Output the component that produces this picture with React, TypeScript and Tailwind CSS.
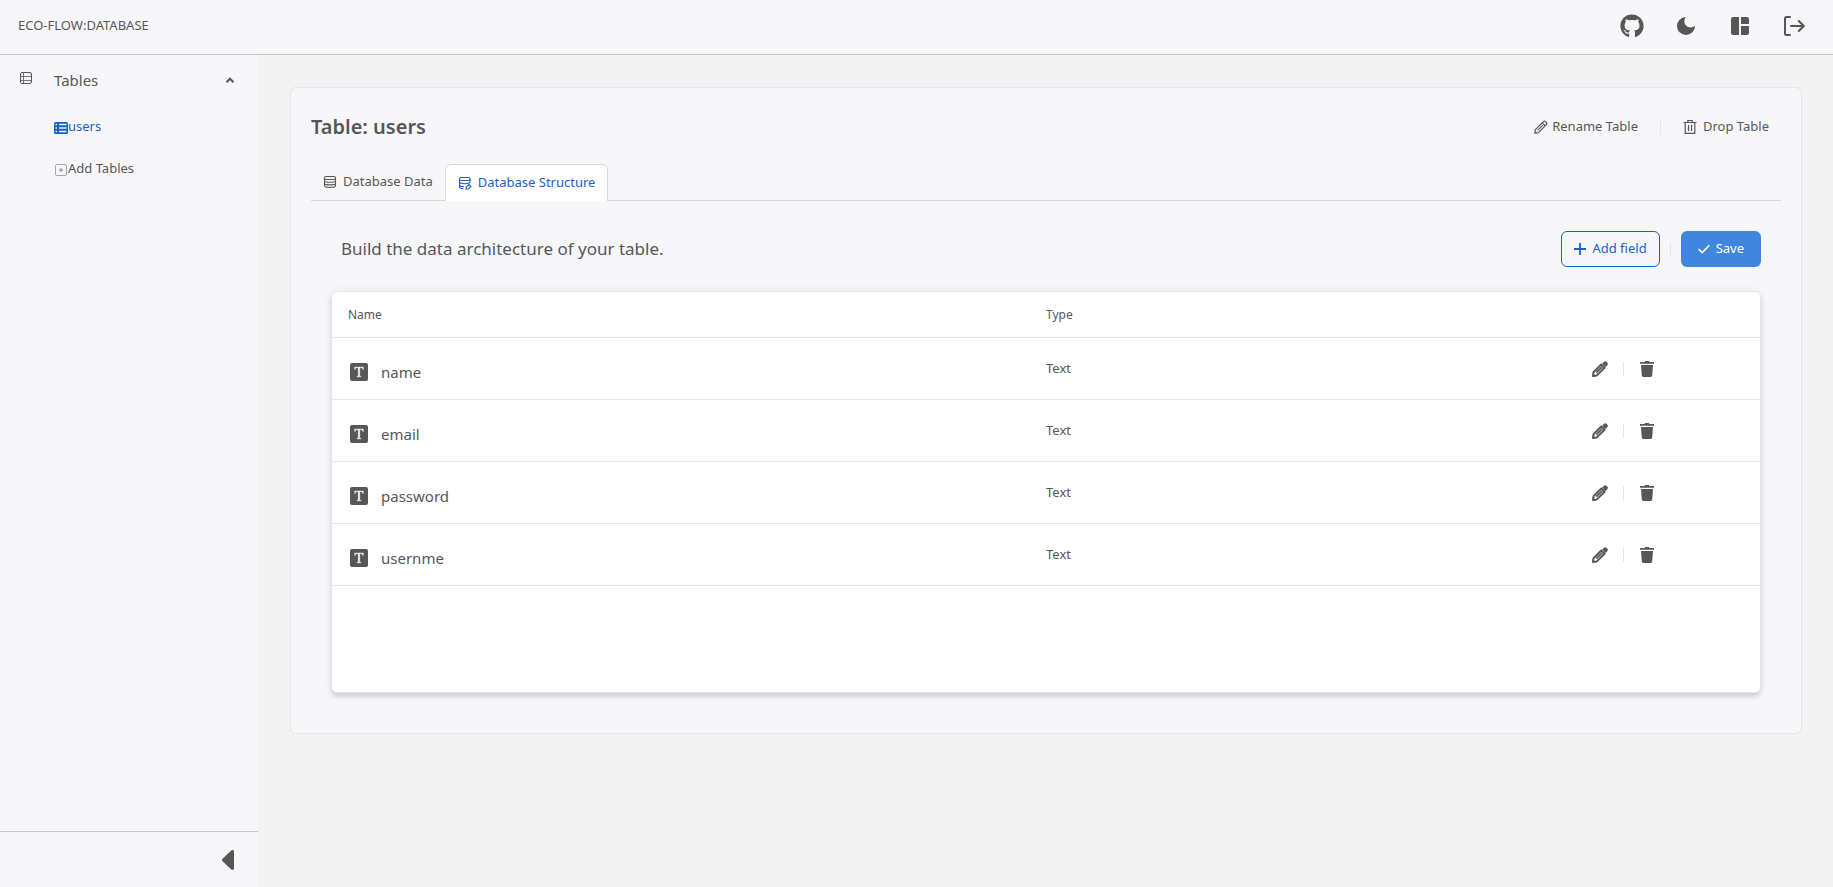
import { useState } from 'react';
import { FaGithub } from 'react-icons/fa';
import { BsFonts } from 'react-icons/bs';

const fields = [
  { name: 'name', type: 'Text' },
  { name: 'email', type: 'Text' },
  { name: 'password', type: 'Text' },
  { name: 'usernme', type: 'Text' },
];

function TableIcon({ filled = false, className = '' }: { filled?: boolean; className?: string }) {
  if (filled) {
    return (
      <svg viewBox="0 0 14 14" className={className} aria-hidden="true">
        <rect x="0" y="1" width="14" height="12" rx="1.5" fill="currentColor" />
        <path
          d="M1.5 3.5h1.5M5 3.5h7.5M1.5 7h1.5M5 7h7.5M1.5 10.5h1.5M5 10.5h7.5"
          stroke="#f7f7fa"
          strokeWidth="1.3"
        />
      </svg>
    );
  }
  return (
    <svg viewBox="0 0 14 14" className={className} fill="none" stroke="currentColor" aria-hidden="true">
      <rect x="1.5" y="1.5" width="11" height="11" rx="1.5" />
      <path d="M4.5 1.5v11M1.5 5.5h11M1.5 9.5h11" strokeWidth="0.8" />
    </svg>
  );
}

function PencilIcon({ bold = false, className = '' }: { bold?: boolean; className?: string }) {
  if (bold) {
    return (
      <svg viewBox="0 0 16 16" className={className} fill="none" stroke="currentColor" aria-hidden="true">
        <path d="M1 15l.5-3.8 7.800-7.700 3.300 3.300-7.800 7.600z" strokeWidth="2" strokeLinejoin="round" />
        <path d="M4.300 11.700l5.800-5.800" strokeWidth="1.700" />
        <path
          d="M10.200 2.600l1.700-1.700a2 2 0 0 1 2.800 0l.5.500a2 2 0 0 1 0 2.800l-1.700 1.700z"
          fill="currentColor"
          stroke="none"
        />
      </svg>
    );
  }
  return (
    <svg viewBox="0 0 14 14" className={className} fill="none" stroke="currentColor" aria-hidden="true">
      <path
        d="M.8 13.200l.6-3.600 8-8a1.500 1.500 0 0 1 2.100 0l.9.900a1.500 1.500 0 0 1 0 2.100l-8 8z"
        strokeWidth="1.200"
        strokeLinejoin="round"
      />
      <path d="M8.200 2.800l3 3M3.800 10.200l5-5" strokeWidth="1.200" />
    </svg>
  );
}

function TrashOutlineIcon() {
  return (
    <svg viewBox="0 0 14 14" className="size-3.5" fill="none" stroke="currentColor" aria-hidden="true">
      <path d="M.5 2.500h13M4.800 2.500v-2h4.400v2M2.200 2.500v10.900h9.600v-10.900M5.500 5v6M8.500 5v6" strokeWidth="1.200" />
    </svg>
  );
}

function TrashIcon() {
  return (
    <svg viewBox="0 0 16 16" className="size-4" fill="currentColor" aria-hidden="true">
      <path d="M1 1h4.500l.6-1h3.800l.6 1H15v1.800H1zM2 4h12l-.8 10.600a1.500 1.500 0 0 1-1.500 1.400H4.300a1.500 1.500 0 0 1-1.500-1.400z" />
    </svg>
  );
}

function DatabaseIcon({ edit = false }: { edit?: boolean }) {
  return (
    <svg viewBox="0 0 14 14" className="size-3.5" fill="none" stroke="currentColor" strokeWidth="1.1" aria-hidden="true">
      {edit ? (
        <>
          <rect x="1.500" y="1.500" width="10.500" height="3" rx="1.500" />
          <path d="M1.500 3v8.300c0 .9 1.500 1.300 4 1.400M12 3v3.200M1.500 6.300c.5 1 2.500 1.400 5.300 1.400s4.700-.4 5.200-1.400M1.500 9.300c.5 1 2 1.300 4.500 1.400" />
          <path d="M8 13.200l.4-2.300 2.600-2.500 2 2-2.700 2.600z" />
        </>
      ) : (
        <>
          <rect x="1.500" y="1.500" width="11" height="3" rx="1.500" />
          <path d="M1.500 3v7.800c0 1.200 1.200 1.700 5.500 1.700s5.500-.5 5.500-1.700V3M1.500 5.800c.3 1.100 1.800 1.400 5.500 1.400s5.200-.3 5.500-1.400M1.500 8.500c.3 1.100 1.800 1.400 5.500 1.400s5.200-.3 5.500-1.400" />
        </>
      )}
    </svg>
  );
}

function Header() {
  return (
    <header className="flex h-[55px] shrink-0 items-center justify-between border-b border-[#c5c6c7] bg-[#f7f7fa] pr-[27px] pb-0.5 pl-[18px]">
      <h1 className="text-[13px]">ECO-FLOW:DATABASE</h1>
      <div className="flex items-center gap-[30px]">
        <a href="#github" aria-label="GitHub">
          <FaGithub className="size-6" />
        </a>
        <button type="button" aria-label="Toggle theme">
          <svg viewBox="0 0 24 24" className="size-6" fill="currentColor" aria-hidden="true">
            <path d="M12 3a6 6 0 0 0 9 8.500A9 9 0 1 1 12 3z" />
          </svg>
        </button>
        <button type="button" aria-label="Dashboard">
          <svg viewBox="0 0 24 24" className="size-6" fill="currentColor" aria-hidden="true">
            <path d="M11 3v18H5a2 2 0 0 1-2-2V5a2 2 0 0 1 2-2zM13 3h6a2 2 0 0 1 2 2v5h-8zM13 12h8v7a2 2 0 0 1-2 2h-6z" />
          </svg>
        </button>
        <button type="button" aria-label="Log out">
          <svg
            viewBox="0 0 24 24"
            className="size-6"
            fill="none"
            stroke="currentColor"
            strokeWidth="2"
            strokeLinecap="round"
            strokeLinejoin="round"
            aria-hidden="true"
          >
            <path d="M8 3H4.500A1.500 1.500 0 0 0 3 4.500v15A1.500 1.500 0 0 0 4.500 21H8M9 12h12.500M16.800 7l5 5-5 5" />
          </svg>
        </button>
      </div>
    </header>
  );
}

function Sidebar() {
  const [open, setOpen] = useState(true);

  return (
    <aside className="flex w-[258px] shrink-0 flex-col bg-[#f7f7fa]">
      <nav className="flex-1">
        <button
          type="button"
          aria-expanded={open}
          onClick={() => setOpen(!open)}
          className="flex h-[51px] w-full items-center pr-[23px] pl-[19px] text-left text-[15px]"
        >
          <TableIcon className="mb-1.5 size-3.5" />
          <span className="ml-[21px] flex-1">Tables</span>
          <svg viewBox="0 0 10 6" className="mb-0.5 h-1.5 w-2.5" fill="none" stroke="currentColor" strokeWidth="2" aria-hidden="true">
            <path d="M1.500 5.200L5 1.700l3.500 3.500" />
          </svg>
        </button>
        {open && (
          <ul className="text-[13px]">
            <li>
              <a href="#users" className="flex h-[42px] items-center pl-[54px] text-[#1b5fc9]">
                <TableIcon filled className="mt-0.5 size-3.5" />
                users
              </a>
            </li>
            <li>
              <button type="button" className="flex h-[42px] w-full items-center pl-[54px]">
                <svg viewBox="0 0 14 14" className="mt-0.5 size-3.5 text-[#a5a5a7]" fill="none" stroke="currentColor" aria-hidden="true">
                  <rect x="1.500" y="1.500" width="11" height="11" rx="1.500" />
                  <path d="M7 5v4M5 7h4" strokeWidth="1.400" />
                </svg>
                Add Tables
              </button>
            </li>
          </ul>
        )}
      </nav>
      <div className="flex h-14 items-center justify-end border-t border-[#c5c6c7] pr-6">
        <button type="button" aria-label="Collapse sidebar">
          <svg viewBox="0 0 12 20" className="h-5 w-3" fill="currentColor" aria-hidden="true">
            <path d="M12 1.500v17c0 1.400-1.800 1.900-3 .8L.6 11.200a1.600 1.600 0 0 1 0-2.400L9 .7c1.200-1.100 3-.6 3 .8z" />
          </svg>
        </button>
      </div>
    </aside>
  );
}

function FieldTable() {
  return (
    <div className="mt-6 min-h-[402px] overflow-hidden rounded-md border border-[#e5e5ea] bg-white shadow-[0_4px_4px_rgba(0,0,0,0.12),0_0_10px_rgba(0,0,0,0.06)]">
      <table className="w-full table-fixed text-left">
        <thead>
          <tr className="h-[45px] border-b border-[#e5e5ea] text-[12px]">
            <th className="w-[50%] pt-0.5 pl-4 font-normal">Name</th>
            <th className="w-[38%] pt-0.5 font-normal">Type</th>
            <th className="w-[12%]" aria-label="Actions" />
          </tr>
        </thead>
        <tbody>
          {fields.map((field) => (
            <tr key={field.name} className="h-[62px] border-b border-[#e5e5ea]">
              <td className="pt-2 pl-[18px]">
                <div className="flex items-center gap-[13px] text-[15px]">
                  <span className="flex size-[18px] items-center justify-center rounded-xs bg-[#575757] text-white">
                    <BsFonts className="size-4" stroke="currentColor" strokeWidth="0.4" />
                  </span>
                  {field.name}
                </div>
              </td>
              <td className="pt-0.5 text-[13px]">{field.type}</td>
              <td className="pt-0.5 pl-[3px]">
                <div className="flex items-center gap-[15px]">
                  <button type="button" aria-label={`Edit ${field.name}`}>
                    <PencilIcon bold className="size-4" />
                  </button>
                  <span className="h-3.5 w-px bg-[#e5e5ea]" />
                  <button type="button" aria-label={`Delete ${field.name}`}>
                    <TrashIcon />
                  </button>
                </div>
              </td>
            </tr>
          ))}
        </tbody>
      </table>
    </div>
  );
}

export default function App() {
  return (
    <div className="flex min-h-screen flex-col bg-[#f3f3f3] font-['Noto_Sans','Open_Sans',sans-serif] text-[#575757]">
      <Header />
      <div className="flex flex-1">
        <Sidebar />
        <main className="min-w-0 flex-1 pt-8 pr-[31px] pl-8">
          <section className="rounded-md border border-[#e5e5ea] bg-[#f7f7fa] px-5 pt-5 pb-10">
            <div className="flex h-[38px] items-center justify-between pr-3">
              <h2 className="text-[20px] font-semibold">Table: users</h2>
              <div className="flex items-center text-[13px]">
                <button type="button" className="flex items-center gap-1">
                  <PencilIcon className="size-3.5" />
                  Rename Table
                </button>
                <span className="mx-[22px] h-4 w-px bg-[#e5e5ea]" />
                <button type="button" className="flex items-center gap-1.5">
                  <TrashOutlineIcon />
                  Drop Table
                </button>
              </div>
            </div>

            <div role="tablist" className="mt-[18px] flex items-end border-b border-[#d9d9d9] text-[13px]">
              <button type="button" role="tab" aria-selected="false" className="flex h-9 items-center gap-1.5 px-3">
                <DatabaseIcon />
                Database Data
              </button>
              <button
                type="button"
                role="tab"
                aria-selected="true"
                className="-mb-px flex h-[37px] items-center gap-1.5 rounded-t-md border border-b-0 border-[#d9d9d9] bg-white px-3 text-[#1b5fc9]"
              >
                <DatabaseIcon edit />
                Database Structure
              </button>
            </div>

            <div className="px-5 pt-[30px]">
              <div className="flex h-9 items-center justify-between">
                <p className="pl-2.5 text-[17px]">Build the data architecture of your table.</p>
                <div className="flex items-center text-[13px]">
                  <button
                    type="button"
                    className="flex h-9 items-center gap-1.5 rounded-md border border-[#1b5fc9] px-3 text-[#1b5fc9]"
                  >
                    <svg viewBox="0 0 12 12" className="size-3" stroke="currentColor" strokeWidth="1.800" aria-hidden="true">
                      <path d="M6 0v12M0 6h12" />
                    </svg>
                    Add field
                  </button>
                  <span className="mx-2.5 h-3.5 w-px bg-[#e5e5ea]" />
                  <button type="button" className="flex h-9 items-center gap-1.5 rounded-md bg-[#4086df] px-[17px] text-white">
                    <svg viewBox="0 0 12 10" className="h-2.5 w-3" fill="none" stroke="currentColor" strokeWidth="1.600" aria-hidden="true">
                      <path d="M.6 5.200L4.200 8.600 11.400 1.200" />
                    </svg>
                    Save
                  </button>
                </div>
              </div>
              <FieldTable />
            </div>
          </section>
        </main>
      </div>
    </div>
  );
}
